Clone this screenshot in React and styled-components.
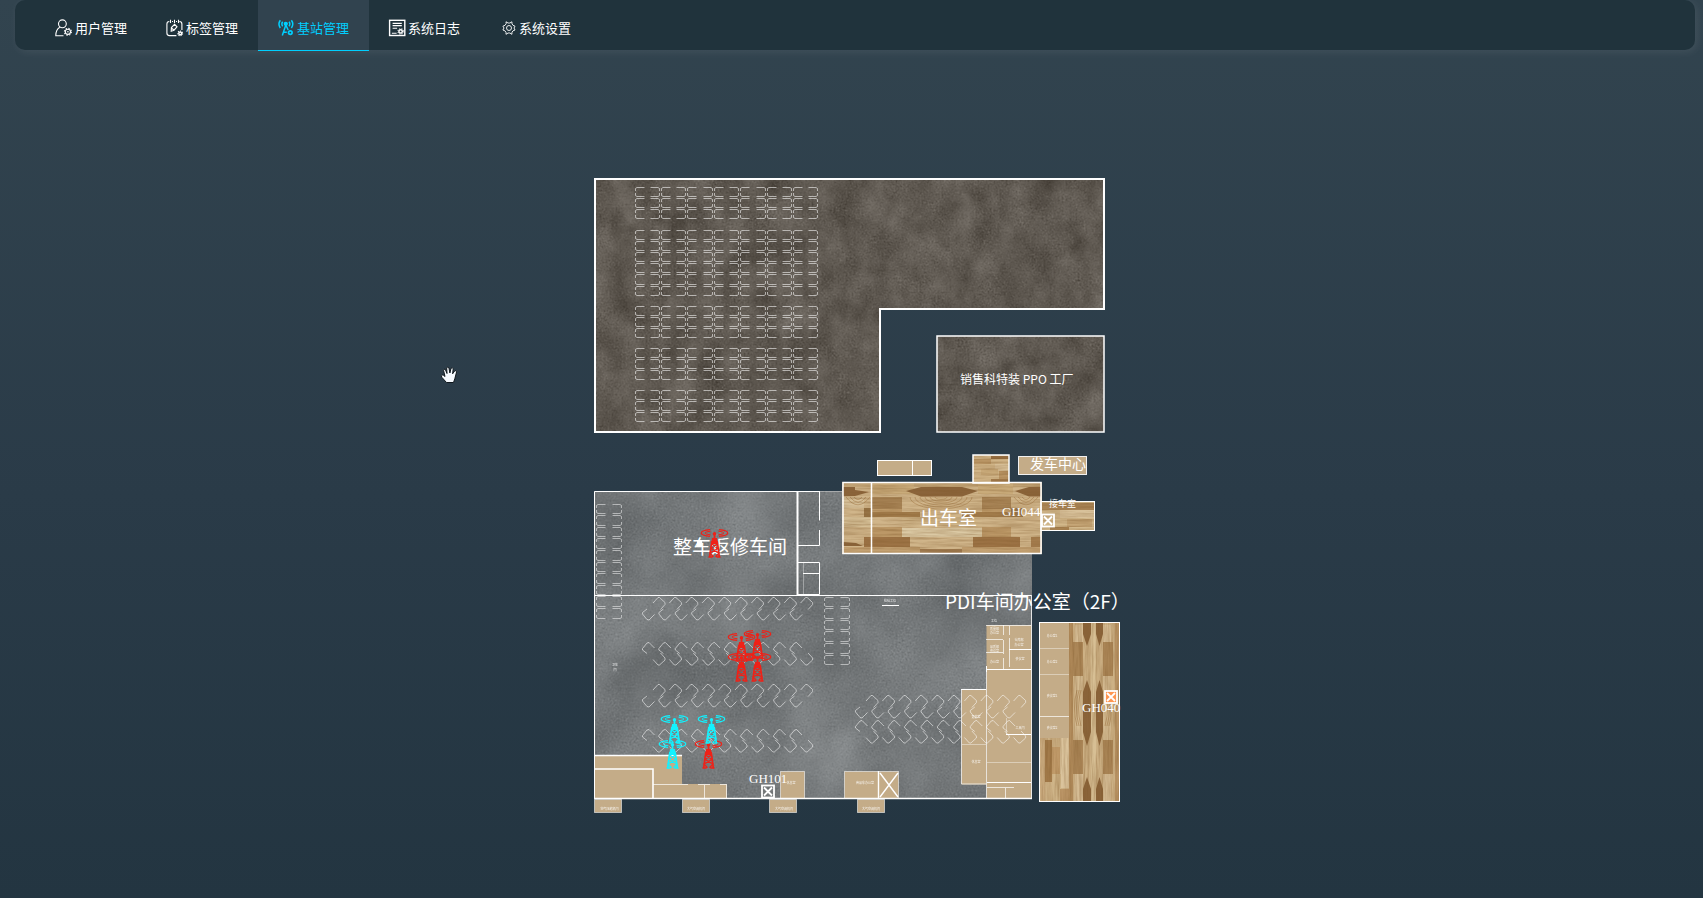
import React from "react";
import styled, { createGlobalStyle } from "styled-components";

const GlobalStyle = createGlobalStyle`
  * { box-sizing: border-box; }
  body {
    margin: 0;
    background: #2c3d49;
    font-family: "Noto Sans CJK SC", "Noto Sans", sans-serif;
  }
`;

const Page = styled.div`
  display: flex;
  flex-direction: column;
  min-height: 100vh;
  background: linear-gradient(180deg, #32444f 0%, #2a3b48 55%, #233541 100%);
`;

const NavBar = styled.nav`
  display: flex;
  height: 50px;
  margin: 0 8px 0 15px;
  padding-left: 21px;
  border-radius: 10px;
  background: #20333c;
  box-shadow: 2px 2px 8px rgba(255, 255, 255, 0.08);
`;

const Tab = styled.a`
  display: flex;
  align-items: center;
  gap: 2px;
  height: 51px;
  width: 111px;
  padding: 6px 0 0 19px;
  font-size: 13px;
  line-height: 20px;
  white-space: nowrap;
  text-decoration: none;
  color: ${(p) => (p.$active ? "#00cfff" : "#ffffff")};
  background: ${(p) => (p.$active ? "#31434f" : "transparent")};
  border-bottom: 1px solid ${(p) => (p.$active ? "#00cfff" : "transparent")};
`;

const TabIcon = styled.svg`
  flex: none;
  width: 18px;
  height: 18px;
  fill: none;
  stroke: currentColor;
  stroke-width: 1.1;
`;

const Stage = styled.main`
  position: relative;
  flex: 1;
  display: flex;
  align-items: center;
  justify-content: center;
`;

const FloorPlan = styled.svg`
  display: block;
  flex: none;
  width: 555px;
  height: 688px;
  overflow: visible;
`;

const HandPointer = styled.svg`
  position: absolute;
  left: 440px;
  top: 316px;
  width: 18px;
  height: 18px;
`;

const PlanText = styled.text`
  fill: #ffffff;
  font-size: ${(p) => p.$size}px;
  text-anchor: ${(p) => (p.$middle ? "middle" : "start")};
  opacity: ${(p) => (p.$faint ? 0.85 : 1)};
`;

const CodeText = styled.text`
  fill: #ffffff;
  font-family: "Liberation Serif", serif;
  font-size: 13px;
`;

function Gear({ x, y, r = 2.6 }) {
  return (
    <g>
      <circle cx={x} cy={y} r={r} />
      <circle cx={x} cy={y} r={r + 0.9} strokeDasharray="1.4 1.35" />
      <circle cx={x} cy={y} r="0.8" fill="currentColor" stroke="none" />
    </g>
  );
}

const icons = {
  user: (
    <>
      <circle cx="7.4" cy="4.8" r="3.9" />
      <path d="M4.8 8.2C2 9.8 .8 12.5 .8 16.7H8.5" />
      <Gear x={12.9} y={12.8} />
    </>
  ),
  tag: (
    <>
      <path d="M3.3 2.5Q.9 2.5 .9 5V14Q.9 16.6 3.4 16.6H10.4M13.4 2.5Q15.9 2.5 15.9 5V11M6 2.5H7M10 2.5H11" />
      <path d="M4.5 .8V4M8.5 .8V4M12.5 .8V4" />
      <path d="M5.2 12.2L5.4 8.6L8.6 5.4L11 7.8L8 11.2ZM5.4 8.8L7.8 11" />
      <circle cx="14.2" cy="14.4" r="1.4" strokeWidth="1.5" />
      <circle cx="14.2" cy="14.4" r="2.4" strokeDasharray="1 1" />
    </>
  ),
  station: (
    <g strokeWidth="1.5">
      <path d="M3.3 1.2Q.6 5 3.3 9M5.7 2.8Q4 5 5.7 7.3M14.4 1.2Q17.2 5 14.4 9M12 2.8Q13.7 5 12 7.3" />
      <circle cx="8.8" cy="4.8" r="1.4" fill="currentColor" />
      <path d="M8.8 6L5.3 16.5M8.8 6L11.2 11M6.8 13.2H9.8" />
      <circle cx="13.3" cy="13.6" r="1.8" strokeWidth="1.7" />
    </g>
  ),
  log: (
    <>
      <rect x="1.6" y="1.3" width="15.2" height="15.2" strokeWidth="1.4" />
      <path d="M4.6 4.4H13.8M4.6 6.6H13.8M4.6 9.3H9.1M3.9 14.2H8.6" />
      <circle cx="12.6" cy="12.4" r="1.7" strokeWidth="1.5" />
      <circle cx="12.6" cy="12.4" r="2.7" strokeDasharray="1 1.2" />
    </>
  ),
  settings: (
    <g strokeWidth="1" strokeOpacity="0.9">
      <path d="M7.2 4.6L7 2.8L9.1 4L10.8 4L12.9 2.8L13 4.8L14 6.3L16 7.2L15 9L16 11L14 11.8L13 13.2L12.9 15.3L10.8 14H9.1L7 15.3V13.3L5.9 11.8L3.9 11L5 9L3.9 7.2L6 6.3Z" />
      <circle cx="10" cy="9" r="2.5" />
    </g>
  ),
};

const tabs = [
  { id: "user", label: "用户管理" },
  { id: "tag", label: "标签管理" },
  { id: "station", label: "基站管理" },
  { id: "log", label: "系统日志" },
  { id: "settings", label: "系统设置" },
];

const range = (n) => Array.from({ length: n }, (_, i) => i);
const snap = (v) => Math.floor(v) + 0.5;

/* A parking stall drawn by its four open corners, each turning into a short tick. */
function stallPath(x, y, r, b) {
  return (
    `M${x + 9} ${y}H${x + 1.5}L${x} ${y + 1}v2.5M${x} ${b - 3.5}v2.5L${x + 1.5} ${b}H${x + 9}` +
    `M${r - 9} ${y}H${r - 1.5}L${r} ${y + 1}v2.5M${r} ${b - 3.5}v2.5L${r - 1.5} ${b}H${r - 9}`
  );
}

function StallGrid({ x, y, cols, rows, pitchX, pitchY, opacity = 0.56 }) {
  const d = range(cols)
    .flatMap((c) =>
      range(rows).map((r) =>
        stallPath(
          snap(x + c * pitchX),
          snap(y + r * pitchY),
          snap(x + (c + 1) * pitchX) - 2,
          snap(y + (r + 1) * pitchY) - 2
        )
      )
    )
    .join("");
  return <path d={d} fill="none" stroke="#fff" strokeOpacity={opacity} />;
}

function SlantedStalls({ x, y, flip }) {
  const fy = (v) => (flip ? y + 23.5 - v : y + v);
  const line = (ox, pts) => "M" + pts.map(([a, b]) => `${ox + a} ${fy(b)}`).join("L");
  const d = range(10)
    .map((i) => {
      const ox = x + i * 16.4;
      return (
        line(ox, [[5, 12], [0.5, 15.5], [0.5, 17], [5, 22.5], [7, 23], [12.5, 17.5]]) +
        line(ox, [[11, 6], [16, 0.5], [17.5, 0.5], [23, 5.5], [23, 7.5], [18.5, 12.5]])
      );
    })
    .join("");
  return <path d={d} fill="none" stroke="#fff" strokeOpacity="0.55" />;
}

function Tower({ x, y, color }) {
  return (
    <g transform={`translate(${x} ${y})`} fill="none" stroke={color}>
      <path
        d="M-4.5 -3.4A13 3.6 0 0 0 -4.5 3.4M4.5 -3.4A13 3.6 0 0 1 4.5 3.4"
        strokeWidth="1.3"
      />
      <path
        d="M-4 -1.8A9.5 2 0 0 0 -4 1.8M4 -1.8A9.5 2 0 0 1 4 1.8"
        strokeWidth="1"
      />
      <circle cx="0" cy="0.8" r="1.7" fill={color} stroke="none" />
      <path d="M0 1V6" strokeWidth="1.8" />
      <path d="M-2.5 5H2.5L3.2 11H-3.2Z" fill={color} stroke="none" />
      <path d="M-2.6 8L-3.4 13L-4.8 24M2.6 8L3.4 13L4.8 24" strokeWidth="1.7" />
      <path d="M-2.8 11L3.4 15.5L-4.4 20L-1 23.8M2.8 11L-3.4 15.5L4.4 20L1 23.8M-6 24H-2M2 24H6" strokeWidth="1.3" />
    </g>
  );
}

function CrossBox({ x, y, size = 12, fill = "none" }) {
  return (
    <g fill="none" stroke="#fff" strokeWidth="1.8">
      <rect x={x} y={y} width={size} height={size} fill={fill} />
      <path d={`M${x + 2} ${y + 2}l${size - 4} ${size - 4}M${x + size - 2} ${y + 2}l${4 - size} ${size - 4}`} />
    </g>
  );
}

function Room({ x, y, w, h, line = 0.55 }) {
  return <rect x={x} y={y} width={w} height={h} fill="#c4ac88" stroke="#fff" strokeOpacity={line} />;
}

function Planks({ items }) {
  return items.map(([x, y, w, h, fill], i) => (
    <rect key={i} x={x} y={y} width={w} height={h} fill={fill} />
  ));
}

const hallPlanks = [
  [842, 482, 200, 72, "#d0b58a"],
  [842, 482, 200, 5, "#c0a274"],
  [872, 482, 42, 12, "#c9ab7a"],
  [978, 482, 35, 12, "#c9ab7a"],
  [842, 497, 22, 11, "#d6c099"],
  [872, 497, 30, 12, "#a88456"],
  [982, 497, 29, 12, "#a88456"],
  [864, 508, 8, 9, "#967345"],
  [872, 512, 48, 5, "#a17b4a"],
  [872, 509, 30, 3, "#c09d6c"],
  [962, 512, 49, 5, "#a17b4a"],
  [982, 509, 29, 3, "#c09d6c"],
  [1011, 508, 12, 9, "#967345"],
  [842, 517, 30, 10, "#d5bf96"],
  [902, 517, 80, 10, "#d1b78b"],
  [872, 527, 30, 10, "#bc9867"],
  [982, 527, 29, 10, "#bc9867"],
  [902, 528, 80, 9, "#dbc9a4"],
  [864, 537, 46, 10, "#9d7345"],
  [973, 537, 47, 10, "#9d7345"],
  [1031, 537, 10, 10, "#a57d4e"],
  [842, 547, 78, 6, "#c3a172"],
  [962, 547, 79, 6, "#c3a172"],
];

const annexPlanks = [
  [1041, 501, 54, 30, "#d2b88b"],
  [1041, 503, 54, 7, "#a98455"],
  [1060, 510, 34, 8, "#d8c19a"],
  [1067, 519, 25, 8, "#c6a677"],
  [1050, 527, 19, 3, "#a98352"],
];

const porchPlanks = [
  [973, 455, 36, 28, "#d0b487"],
  [991, 456, 18, 3, "#956d40"],
  [974, 459, 17, 5, "#bd9968"],
  [995, 464, 13, 7, "#d6be96"],
  [981, 469, 17, 6, "#c8a979"],
  [999, 471, 9, 9, "#ba9564"],
  [991, 479, 17, 4, "#a27b4c"],
];

const officePlanks = [
  [1040, 622, 79, 179, "#cdb185"],
  [1069, 622, 4, 179, "#b28c5c"],
  [1115, 622, 4, 179, "#b89364"],
  [1091, 622, 5, 179, "#d7bf94"],
  [1073, 642, 10, 34, "#ab8657"],
  [1103, 642, 10, 34, "#ab8657"],
  [1073, 740, 10, 34, "#ab8657"],
  [1103, 740, 10, 34, "#ab8657"],
  [1075, 625, 8, 17, "#d5bc94"],
  [1103, 625, 8, 17, "#d5bc94"],
  [1075, 676, 8, 64, "#d4bb92"],
  [1103, 676, 8, 64, "#d4bb92"],
  [1075, 774, 8, 27, "#d5bc94"],
  [1103, 774, 8, 27, "#d5bc94"],
  [1040, 738, 5, 63, "#cbac80"],
  [1045, 740, 7, 42, "#a37b4a"],
  [1052, 747, 8, 27, "#c39d6c"],
  [1060, 738, 9, 50, "#dac39c"],
  [1052, 774, 9, 27, "#d1b78b"],
  [1060, 789, 9, 12, "#ba9465"],
];

const darkStrips = [
  [1083, 1091],
  [1096, 1103],
];

function WoodDetails() {
  return (
    <g>
      <g fill="#8b643a">
        <path d="M843 487H855V490L869 492L855 496H843Z" />
        <path d="M906 491L921 487H962L978 491L962 496.5H921Z" />
        <path d="M1015 491L1029 487H1041V496.5H1029Z" />
        <path d="M920 549H962V553H920Z" opacity="0.7" />
        <path d="M843 542L856 543L863 546H843Z" />
        {darkStrips.map(([a, b]) => {
          const m = (a + b) / 2;
          return (
            <path
              key={a}
              d={
                `M${a} 622H${b}V634L${m} 646L${a} 634ZM${m} 680L${b} 692V732L${m} 746L${a} 732V692Z` +
                `M${m} 777L${b} 789V801H${a}V789Z`
              }
            />
          );
        })}
      </g>
      <g fill="none" stroke="#a98352" strokeWidth="0.8" opacity="0.8">
        {[6, 11, 16, 21, 26, 31].map((r) => (
          <path key={r} d={`M${941 - r} 497A${r} ${r / 2.6} 0 0 0 ${941 + r} 497`} />
        ))}
        {[4, 8, 12].map((r) => (
          <path key={r} d={`M${858 - r} 497Q858 ${497 + r * 1.3} ${858 + r} 497M${1026 - r} 497Q1026 ${497 + r * 1.3} ${1026 + r} 497`} />
        ))}
        {[2, 4, 6].map((r) => (
          <path key={r} d={`M${1083 - r} 690Q${1078 - r} 708 ${1083 - r} 726M${1103 + r} 690Q${1108 + r} 708 ${1103 + r} 726`} />
        ))}
      </g>
    </g>
  );
}

const stations = [
  [714.5, 533, "red"],
  [741.5, 637, "red"],
  [757.5, 634, "red"],
  [741.5, 657, "red"],
  [757.5, 657, "red"],
  [708.5, 744, "red"],
  [674.5, 719, "cyan"],
  [711.5, 719, "cyan"],
  [672.5, 744, "cyan"],
];
const stationColor = { red: "#ee2218", cyan: "#12f2ff" };

const smallLabels = [
  [609.5, 809.5, "空气压缩机间"],
  [696, 809.5, "大气空调机间"],
  [784, 809.5, "大气空调机间"],
  [871, 809.5, "大气空调机间"],
  [791, 784, "休息室"],
  [865, 784, "商品车办公室"],
  [615, 666, "卫生"],
  [615, 671, "间"],
  [890, 602, "检验工位"],
  [994, 622, "工位"],
  [994.5, 630, "质量部"],
  [994.5, 634, "办公室"],
  [994.5, 648, "品质部"],
  [994.5, 652, "会议室"],
  [994.5, 663, "办公室"],
  [1019, 641, "仓库部"],
  [1019, 646, "办公室"],
  [1020, 660, "会议室"],
  [976, 718, "更衣室"],
  [976, 763, "休息室"],
  [1020, 729, "工具间"],
  [1052, 637, "办公室1"],
  [1052, 663, "办公室2"],
  [1052, 697, "会议室1"],
  [1052, 729, "会议室2"],
];

function NoiseFilter({ id, freq, seed, gain, base }) {
  const row = (b) => `${gain} 0.2 0 0 ${b}`;
  return (
    <filter id={id} x="0" y="0" width="100%" height="100%" colorInterpolationFilters="sRGB">
      <feTurbulence type="fractalNoise" baseFrequency={freq} numOctaves="6" seed={seed} result="broad" />
      <feTurbulence type="fractalNoise" baseFrequency="0.5" numOctaves="2" seed={seed + 3} result="fine" />
      <feComposite in="broad" in2="fine" operator="arithmetic" k2="0.6" k3="0.4" />
      <feColorMatrix values={`${row(base[0])} ${row(base[1])} ${row(base[2])} 0 0 0 0 1`} />
      <feComposite in2="SourceGraphic" operator="in" />
    </filter>
  );
}

function GrainFilter({ id, freq }) {
  return (
    <filter id={id} x="0" y="0" width="100%" height="100%" colorInterpolationFilters="sRGB">
      <feTurbulence type="fractalNoise" baseFrequency={freq} numOctaves="3" seed="5" />
      <feColorMatrix values="0 0 0 0 0.5  0 0 0 0 0.35  0 0 0 0 0.17  0.7 0 0 0 -0.23" />
      <feComposite in2="SourceGraphic" operator="in" />
    </filter>
  );
}

function Plan() {
  return (
    <FloorPlan viewBox="574 130 555 688" role="img" aria-label="基站分布图">
      <defs>
        <NoiseFilter id="earth" freq="0.036 0.03" seed={4} gain={0.28} base={[0.132, 0.108, 0.078]} />
        <NoiseFilter id="concrete" freq="0.014" seed={9} gain={0.18} base={[0.265, 0.28, 0.287]} />
        <GrainFilter id="grainAcross" freq="0.03 0.5" />
        <GrainFilter id="grainDown" freq="0.5 0.03" />
      </defs>

      <path d="M595 179H1104V309H880V432H595Z" filter="url(#earth)" />
      <path d="M595 179H1104V309H880V432H595Z" fill="none" stroke="#fff" strokeWidth="2" />
      {[[187, 3, 11], [230, 6, 11.2], [306, 3, 11], [348, 3, 11], [390, 3, 11]].map(([y, rows, p]) => (
        <StallGrid key={y} x={635} y={y} cols={7} rows={rows} pitchX={26.4} pitchY={p} />
      ))}
      <rect x="937" y="336" width="167" height="96" filter="url(#earth)" />
      <rect x="937" y="336" width="167" height="96" fill="none" stroke="#fff" strokeWidth="1.5" />

      <rect x="594" y="491" width="438" height="308" filter="url(#concrete)" />
      <StallGrid x={596} y={504} cols={1} rows={10} pitchX={27} pitchY={11.6} opacity={0.5} />
      <StallGrid x={824} y={597} cols={1} rows={6} pitchX={27} pitchY={11.6} opacity={0.5} />
      <SlantedStalls x={642} y={597} />
      <SlantedStalls x={642} y={642} flip />
      <SlantedStalls x={642} y={684} />
      <SlantedStalls x={642} y={729} flip />

      <g fill="#c4ac88">
        <path d="M594 755H682V784H727V798H594Z" />
        <rect x="961.5" y="689.5" width="25" height="95" />
        <rect x="986.5" y="625" width="45" height="173" />
      </g>
      <Room x={780.5} y={771.5} w={24} h={27} />
      <Room x={844.5} y={771.5} w={54} h={27} />
      <Room x={594.5} y={799.5} w={27} h={13} />
      <Room x={682.5} y={799.5} w={27} h={13} />
      <Room x={769.5} y={799.5} w={27} h={13} />
      <Room x={857.5} y={799.5} w={27} h={13} />
      <SlantedStalls x={855} y={695} />
      <SlantedStalls x={855} y={720} flip />

      <g fill="none" stroke="#fff">
        <path d="M594.5 798V491.5H820" />
        <path d="M594 595.5H1031" />
        <path d="M594 798.5H1032" strokeWidth="1.4" />
        <path d="M797.5 491V595" strokeWidth="2" />
        <path d="M797 491.5H819.5V520.5M819.5 530V545.5H797M797 562.5H819.5V594.5H797M803 573.5H819" />
        <path d="M803.5 563V594M820 491.5H842" strokeOpacity="0.35" />
        <path d="M1031.5 595V798" strokeOpacity="0.8" />
        <path d="M882 605.5H899" />
        <path d="M594 755.5H682" strokeWidth="1.6" />
        <path d="M594 769H653V798" strokeWidth="1.6" />
        <path d="M653 784.5H688M698 784.5H710M720 784.5H727M704.5 785V798M726.5 785V798" strokeOpacity="0.7" />
        <path d="M878.5 771V798M880 773L898 797M898 773L880 797" strokeWidth="1.4" />
        <path d="M961 689.5H986M986 669.5H1031M987 782.5H1031M986.5 666V672M1006 734.5H1031M1009 649.5H1031" />
        <path d="M986 639.5H1003M986 652.5H1003M1003.5 625V635M1003.5 640V654M1003.5 658V669M1009.5 626V635M1009.5 638V667M986.5 672V798M961.5 690V784H986M986 625.5H1031M987 787.5H1014M1005.5 788V798" strokeOpacity="0.7" />
        <path d="M962 744.5H986M987 762.5H1031M1006.5 718V734" strokeOpacity="0.4" />
      </g>

      <Room x={877.5} y={460.5} w={54} h={15} line={1} />
      <path d="M912.5 460V476" stroke="#fff" />
      <Room x={1018.5} y={456.5} w={68} h={18} line={0.9} />

      <Planks items={porchPlanks} />
      <Planks items={annexPlanks} />
      <Planks items={hallPlanks} />
      <Planks items={officePlanks} />
      <WoodDetails />
      <rect x="842" y="482" width="199" height="71" filter="url(#grainAcross)" />
      <rect x="973" y="455" width="36" height="28" filter="url(#grainAcross)" />
      <rect x="1041" y="501" width="54" height="30" filter="url(#grainAcross)" />
      <rect x="1040" y="622" width="79" height="179" filter="url(#grainDown)" />
      <rect x="1040" y="623" width="29" height="115" fill="#c4ac88" />
      <g fill="none" stroke="#fff">
        <rect x="973" y="455" width="36" height="28" strokeWidth="1.5" />
        <rect x="1041" y="501.5" width="53.5" height="29" />
        <rect x="843" y="482.5" width="198" height="71" strokeWidth="1.5" />
        <path d="M871.5 483V553" strokeWidth="1.5" />
        <rect x="1039.5" y="622.5" width="80" height="179" />
        <path d="M1040 648.5H1069M1040 674.5H1069" strokeOpacity="0.4" />
        <path d="M1040 716.5H1069" strokeOpacity="0.7" />
      </g>

      {smallLabels.map(([x, y, label], i) => (
        <PlanText key={i} x={x} y={y} $size={3} $middle $faint>
          {label}
        </PlanText>
      ))}
      <PlanText x="960" y="384" $size={12}>销售科特装 PPO 工厂</PlanText>
      <PlanText x="673" y="554" $size={19}>整车返修车间</PlanText>
      <PlanText x="920" y="525" $size={19}>出车室</PlanText>
      <PlanText x="1030" y="469" $size={14}>发车中心</PlanText>
      <PlanText x="1049" y="507" $size={9}>接车室</PlanText>
      <PlanText x="945" y="609" $size={19}>PDI车间办公室（2F）</PlanText>

      <CrossBox x={1042} y={514.5} />
      <CrossBox x={762} y={785.5} />
      <CrossBox x={1105} y={691} fill="#ff9650" />
      <CodeText x="1002" y="516">GH044</CodeText>
      <CodeText x="749" y="783">GH101</CodeText>
      <CodeText x="1082" y="712">GH040</CodeText>

      <rect x="697" y="541" width="5" height="6" fill="#fff" />
      {stations.map(([x, y, c], i) => (
        <Tower key={i} x={x} y={y} color={stationColor[c]} />
      ))}
    </FloorPlan>
  );
}

export default function App() {
  return (
    <Page>
      <GlobalStyle />
      <NavBar>
        {tabs.map((t) => (
          <Tab key={t.id} href={`#${t.id}`} $active={t.id === "station"} aria-current={t.id === "station" ? "page" : undefined}>
            <TabIcon viewBox="0 0 18 18" aria-hidden="true">{icons[t.id]}</TabIcon>
            {t.label}
          </Tab>
        ))}
      </NavBar>
      <Stage>
        <Plan />
        <HandPointer viewBox="0 0 18 18" aria-hidden="true">
          <path
            d="M6.5 16.5L2 11.5Q.5 9.5 2.2 9Q3.5 8.8 5 10.5L3.6 4.5Q3.6 2.8 5.2 3.2L7 7.5L6.7 2Q7.5 .2 8.9 1.8L9.9 7L11 2.3Q12.5 1.1 13.2 2.8L12.6 7.8L14.8 4.8Q16.5 4 16.6 5.8L14.8 12.8L13.5 16.5Z"
            fill="#f7fbff"
            stroke="#10181d"
            strokeWidth="1"
          />
        </HandPointer>
      </Stage>
    </Page>
  );
}
